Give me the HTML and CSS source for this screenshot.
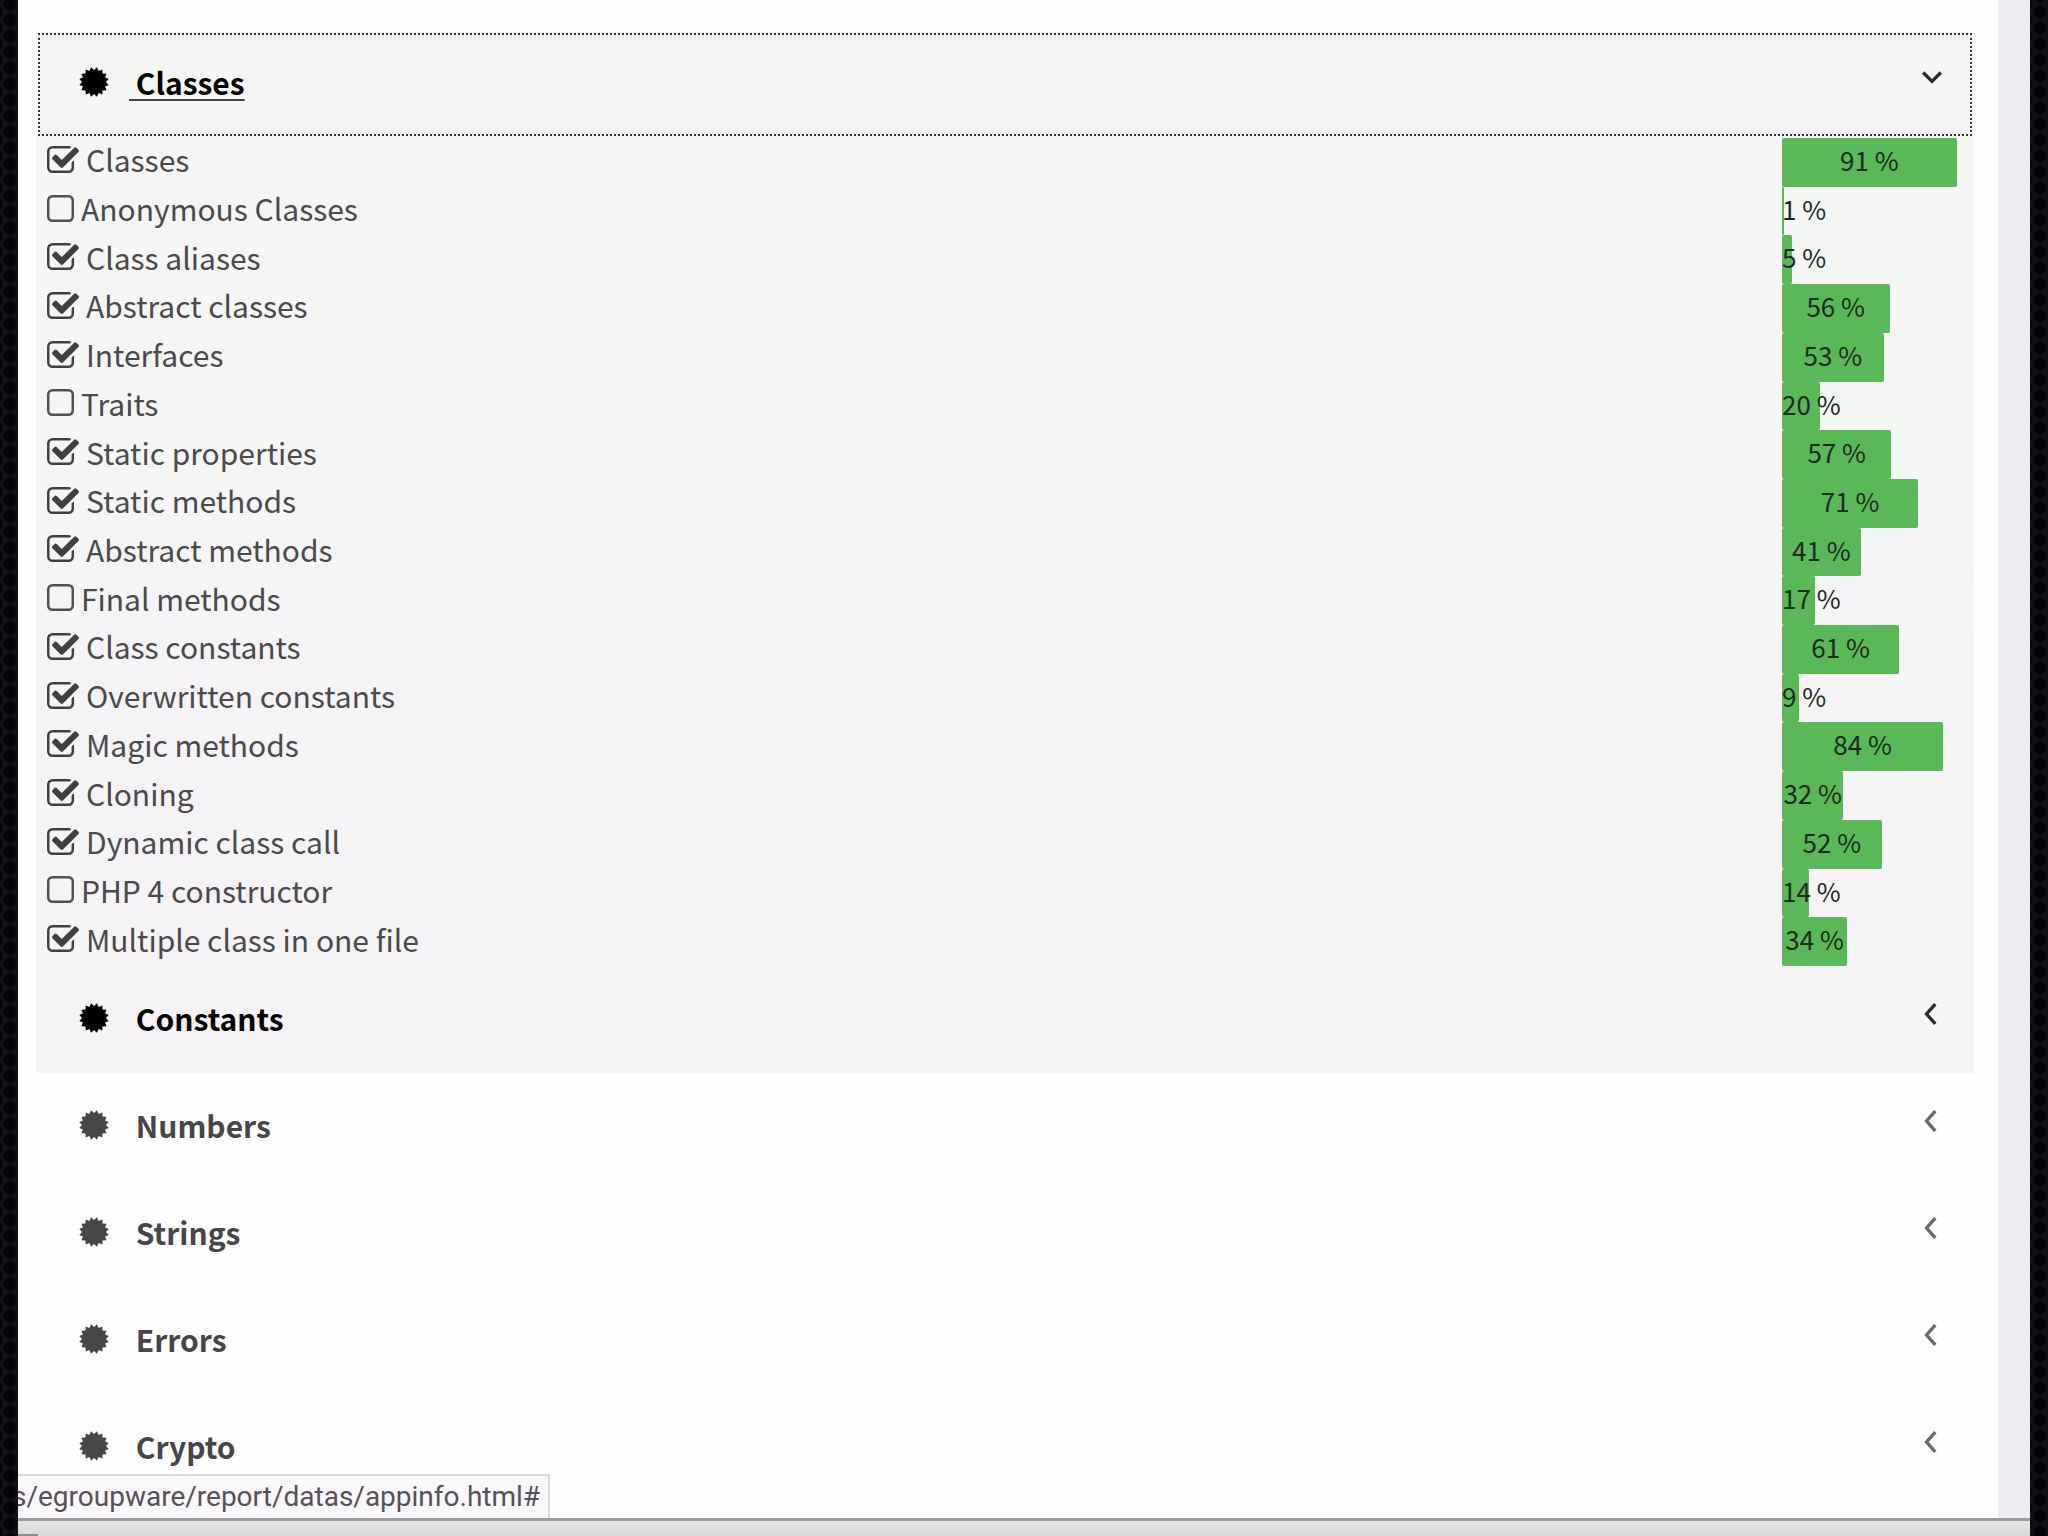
FILE: index.html
```html
<!DOCTYPE html>
<html lang="en">
<head>
<meta charset="utf-8">
<title>Report: appinfo</title>
<link rel="stylesheet" href="styles.css">
</head>
<body>
<svg class="defs" aria-hidden="true">
  <symbol id="seal" viewBox="-50 -50 100 100"><path id="seal-path" d=""/></symbol>
  <symbol id="down" viewBox="0 0 20 20"><path d="M2 5l8 8 8-8"/></symbol>
  <symbol id="left" viewBox="0 0 20 20"><path d="M13 1l-8 9 8 9"/></symbol>
</svg>
<div class="window">
  <main class="page">
    <div class="sections" id="sections">
      <section class="section open">
        <a class="head focused" href="#"><svg class="seal"><use href="#seal"/></svg><span class="title">&nbsp;Classes</span><svg class="arrow"><use href="#down"/></svg></a>
        <table class="features"><tbody id="features"></tbody></table>
        <a class="head" href="#"><svg class="seal"><use href="#seal"/></svg><span class="title">&nbsp;Constants</span><svg class="arrow"><use href="#left"/></svg></a>
      </section>
      <a class="head" href="#"><svg class="seal"><use href="#seal"/></svg><span class="title">&nbsp;Numbers</span><svg class="arrow"><use href="#left"/></svg></a>
      <a class="head" href="#"><svg class="seal"><use href="#seal"/></svg><span class="title">&nbsp;Strings</span><svg class="arrow"><use href="#left"/></svg></a>
      <a class="head" href="#"><svg class="seal"><use href="#seal"/></svg><span class="title">&nbsp;Errors</span><svg class="arrow"><use href="#left"/></svg></a>
      <a class="head" href="#"><svg class="seal"><use href="#seal"/></svg><span class="title">&nbsp;Crypto</span><svg class="arrow"><use href="#left"/></svg></a>
    </div>
    <div class="status">s/egroupware/report/datas/appinfo.html#</div>
  </main>
  <footer class="edge"></footer>
</div>
<script src="app.js"></script>
</body>
</html>
```
FILE: styles.css
```css
* { box-sizing: border-box; }
body {
  margin: 0;
  height: 100vh;
  overflow: hidden;
  padding: 0 18px;
  font-family: "Noto Sans CJK SC", "Open Sans", sans-serif;
  background-color: #15121a;
  background-image:
    radial-gradient(circle at 50% 50%, #060306 5px, transparent 8px),
    radial-gradient(circle at 0 0, #060306 5px, transparent 8px),
    radial-gradient(circle at 100% 0, #060306 5px, transparent 8px),
    radial-gradient(circle at 0 100%, #060306 5px, transparent 8px),
    radial-gradient(circle at 100% 100%, #060306 5px, transparent 8px);
  background-size: 28px 16px;
  background-position: 10px 4px;
}
.defs { display: none; }
.window { height: 100%; display: flex; flex-direction: column; }
.page {
  position: relative;
  flex: 1;
  min-height: 0;
  overflow: hidden;
  background: #fefefe;
  border-right: 32px solid #edeef3;
  padding: 33px 24px 0 18px;
}
.section.open { background: linear-gradient(#f4f6f4, #f4f6f4 40%, #f5f3f6 60%); }
.head {
  display: flex;
  align-items: center;
  height: 107px;
  padding: 0 31px 4px 43px;
  color: #474548;
  font-size: 30px;
  font-weight: 700;
  line-height: 48px;
  text-decoration: none;
}
.open .head { color: #000; }
.head.focused {
  height: 103px;
  margin: 0 2px;
  padding: 0 27px 6px 39px;
  border: 2px dotted #333;
}
.focused .title { text-decoration: underline #444 2px; text-underline-offset: 4px; }
.seal { width: 30px; height: 30px; fill: currentColor; }
.title { margin-left: 20px; flex: 1; }
.arrow { width: 22px; height: 22px; margin-bottom: 8px; fill: none; stroke: #6a686b; stroke-width: 3px; }
.open .arrow { stroke: #2c2c2c; }
.features {
  width: 100%;
  height: 830px;
  border-collapse: collapse;
  border-top: 2px solid transparent;
  color: #4a4a4b;
  font-size: 30px;
  line-height: 44px;
}
.features td { padding: 0; }
.name { height: 48px; padding: 0 0 6px 11px; display: flex; align-items: center; }
.name input {
  appearance: none;
  flex: none;
  width: 27px;
  height: 27px;
  margin: 0 7px 0 0;
  background: url("data:image/svg+xml,%3Csvg xmlns='http://www.w3.org/2000/svg' viewBox='192 128 1408 1408'%3E%3Cpath fill='%23505050' d='M1312 256h-832q-66 0-113 47t-47 113v832q0 66 47 113t113 47h832q66 0 113-47t47-113v-832q0-66-47-113t-113-47zm288 160v832q0 119-84.5 203.5t-203.5 84.5h-832q-119 0-203.5-84.5t-84.5-203.5v-832q0-119 84.5-203.5t203.5-84.5h832q119 0 203.5 84.5t84.5 203.5z'/%3E%3C/svg%3E") center / 100% 100%;
}
.name input:checked {
  width: 32px;
  background-image: url("data:image/svg+xml,%3Csvg xmlns='http://www.w3.org/2000/svg' viewBox='64 128 1664 1408'%3E%3Cpath fill='%23404040' d='M1472 930v318q0 119-84.5 203.5t-203.5 84.5h-832q-119 0-203.5-84.5t-84.5-203.5v-832q0-119 84.5-203.5t203.5-84.5h832q63 0 117 25 15 7 18 23 3 17-9 29l-49 49q-10 10-23 10-3 0-9-2-23-6-45-6h-832q-66 0-113 47t-47 113v832q0 66 47 113t113 47h832q66 0 113-47t47-113v-254q0-13 9-22l64-64q10-10 23-10 6 0 12 3 20 8 20 29zm231-489l-814 814q-24 24-57 24t-57-24l-430-430q-24-24-24-57t24-57l110-110q24-24 57-24t57 24l263 263 647-647q24-24 57-24t57 24l110 110q24 24 24 57t-24 57z'/%3E%3C/svg%3E");
}
.share { width: 192px; }
.bar {
  display: flex;
  justify-content: safe center;
  height: 100%;
  min-height: 48px;
  border-radius: 2px;
  background: #5ab859;
  color: #1c2a1c;
  font-size: 26px;
  white-space: nowrap;
}
.status {
  position: absolute;
  left: 0;
  bottom: 0;
  padding: 0 8px 0 0;
  border: 2px solid #dcd8dd;
  border-left: 0;
  border-bottom: 0;
  background: #faf7fb;
  color: #555156;
  font: 28px/42px Roboto, sans-serif;
  text-indent: -6px;
}
.edge {
  height: 18px;
  border-top: 3px solid #9a999b;
  background:
    linear-gradient(#8d8b8e, #8d8b8e) left bottom / 20px 2px no-repeat,
    linear-gradient(#e6e4e7, #d9d7da);
}
```
FILE: app.js
```js
const features = [
  ["Classes", 1, 91], ["Anonymous Classes", 0, 1], ["Class aliases", 1, 5],
  ["Abstract classes", 1, 56], ["Interfaces", 1, 53], ["Traits", 0, 20],
  ["Static properties", 1, 57], ["Static methods", 1, 71], ["Abstract methods", 1, 41],
  ["Final methods", 0, 17], ["Class constants", 1, 61], ["Overwritten constants", 1, 9],
  ["Magic methods", 1, 84], ["Cloning", 1, 32], ["Dynamic class call", 1, 52],
  ["PHP 4 constructor", 0, 14], ["Multiple class in one file", 1, 34]
];
document.getElementById("features").innerHTML = features.map(([name, on, share]) =>
  `<tr><td><label class="name"><input type="checkbox"${on ? " checked" : ""}>${name}</label></td>` +
  `<td class="share"><div class="bar" style="width:${share}%">${share} %</div></td></tr>`).join("");

// Toothed seal: 16 points alternating between an outer and an inner radius.
const teeth = 16;
const points = [];
for (let i = 0; i < teeth * 2; i++) {
  const r = i % 2 ? 40 : 50;
  const a = (i + 1) * Math.PI / teeth;
  points.push(`${(r * Math.cos(a)).toFixed(1)} ${(r * Math.sin(a)).toFixed(1)}`);
}
document.getElementById("seal-path").setAttribute("d", `M${points.join("L")}Z`);
```
